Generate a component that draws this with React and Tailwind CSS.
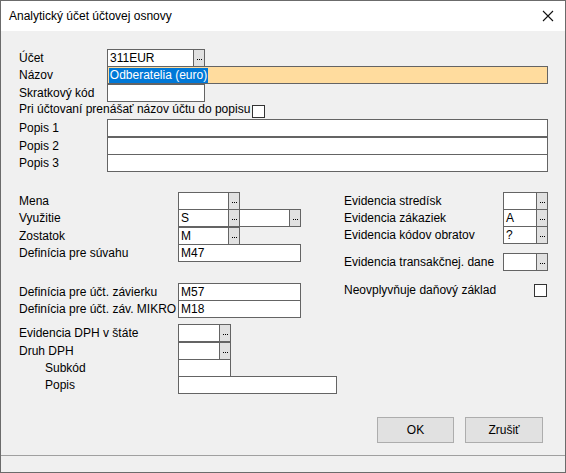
import React from "react";

const box = "border border-[#646464] bg-white h-[18px] flex items-center pl-[2px] text-[12px] leading-none text-black";

function Dots() {
  return (
    <div className="-ml-px h-[18px] w-[12px] border border-[#646464] bg-[#e1e1e1] flex items-end justify-center gap-[1px] pb-[6px]">
      <span className="w-[1px] h-[1px] bg-black" />
      <span className="w-[1px] h-[1px] bg-black" />
      <span className="w-[1px] h-[1px] bg-black" />
    </div>
  );
}

function Label({ children, className = "" }) {
  return <div className={"h-[18px] leading-[18px] text-[12px] text-black whitespace-nowrap " + className}>{children}</div>;
}

function Check() {
  return <div className="w-[13px] h-[13px] border border-[#333333] bg-white" />;
}

export default function App() {
  return (
    <div
      className="w-[566px] h-[473px] border border-[#6b6b6b] bg-[#f0f0f0] flex flex-col overflow-hidden"
      style={{ fontFamily: '"Liberation Sans", Arial, sans-serif' }}
    >
      {/* title bar */}
      <div className="h-[30px] bg-white flex items-center justify-between pl-[8px] pr-[10px] shrink-0">
        <span className="text-[12px] text-black">Analytický účet účtovej osnovy</span>
        <svg width="12" height="12" viewBox="0 0 12 12" className="mr-[1px]">
          <path d="M1 1 L11 11 M11 1 L1 11" stroke="#111" strokeWidth="1.1" fill="none" />
        </svg>
      </div>

      {/* content */}
      <div className="h-[424px] flex flex-col pt-[18px] pl-[18px] pr-[17px] shrink-0">
        {/* top section */}
        <div className="flex flex-col">
          <div className="flex h-[17px]">
            <Label className="w-[88px]">Účet</Label>
            <div className={box + " w-[87px]"}>311EUR</div>
            <Dots />
          </div>
          <div className="flex h-[18px]">
            <Label className="w-[88px]">Názov</Label>
            <div className="border border-[#646464] bg-[#ffdc9e] h-[18px] w-[442px] flex items-center pl-[1px] text-[12px] leading-none">
              <span className="bg-[#0078d7] text-white h-[15px] flex items-center px-[1px]">Odberatelia (euro)</span>
            </div>
          </div>
          <div className="flex h-[17px]">
            <Label className="w-[88px]">Skratkový kód</Label>
            <div className={box + " w-[98px]"}></div>
          </div>
          <div className="flex h-[18px] items-start">
            <Label className="mt-[-1px]">Pri účtovaní prenášať názov účtu do popisu</Label>
            <div className="mt-[4px] ml-[2px]">
              <Check />
            </div>
          </div>
          <div className="flex h-[18px]">
            <Label className="w-[88px]">Popis 1</Label>
            <div className={box + " w-[442px]"}></div>
          </div>
          <div className="flex h-[17px]">
            <Label className="w-[88px]">Popis 2</Label>
            <div className={box + " w-[442px]"}></div>
          </div>
          <div className="flex h-[18px]">
            <Label className="w-[88px]">Popis 3</Label>
            <div className={box + " w-[442px]"}></div>
          </div>
        </div>

        {/* middle section */}
        <div className="flex mt-[20px]">
          <div className="w-[325px] flex flex-col">
            <div className="flex h-[17px]">
              <Label className="w-[159px]">Mena</Label>
              <div className={box + " w-[51px]"}></div>
              <Dots />
            </div>
            <div className="flex h-[18px]">
              <Label className="w-[159px]">Využitie</Label>
              <div className={box + " w-[51px]"}>S</div>
              <Dots />
              <div className={box + " w-[51px] -ml-px"}></div>
              <Dots />
            </div>
            <div className="flex h-[17px]">
              <Label className="w-[159px]">Zostatok</Label>
              <div className={box + " w-[51px]"}>M</div>
              <Dots />
            </div>
            <div className="flex h-[39px]">
              <Label className="w-[159px]">Definícia pre súvahu</Label>
              <div className={box + " w-[123px]"}>M47</div>
            </div>
            <div className="flex h-[17px]">
              <Label className="w-[159px]">Definícia pre účt. závierku</Label>
              <div className={box + " w-[123px]"}>M57</div>
            </div>
            <div className="flex h-[18px]">
              <Label className="w-[159px]">Definícia pre účt. záv. MIKRO</Label>
              <div className={box + " w-[123px]"}>M18</div>
            </div>
          </div>

          <div className="flex flex-col">
            <div className="flex h-[17px]">
              <Label className="w-[159px]">Evidencia stredísk</Label>
              <div className={box + " w-[34px]"}></div>
              <Dots />
            </div>
            <div className="flex h-[17px]">
              <Label className="w-[159px]">Evidencia zákaziek</Label>
              <div className={box + " w-[34px]"}>A</div>
              <Dots />
            </div>
            <div className="flex h-[27px]">
              <Label className="w-[159px]">Evidencia kódov obratov</Label>
              <div className={box + " w-[34px]"}>?</div>
              <Dots />
            </div>
            <div className="flex h-[31px]">
              <Label className="w-[159px]">Evidencia transakčnej. dane</Label>
              <div className={box + " w-[34px]"}></div>
              <Dots />
            </div>
            <div className="flex h-[18px] items-start">
              <Label className="w-[190px] -mt-[3px]">Neovplyvňuje daňový základ</Label>
              <Check />
            </div>
          </div>
        </div>

        {/* lower section */}
        <div className="flex flex-col mt-[6px]">
          <div className="flex h-[18px]">
            <Label className="w-[159px]">Evidencia DPH v štáte</Label>
            <div className={box + " w-[42px]"}></div>
            <Dots />
          </div>
          <div className="flex h-[17px]">
            <Label className="w-[159px]">Druh DPH</Label>
            <div className={box + " w-[42px]"}></div>
            <Dots />
          </div>
          <div className="flex h-[17px]">
            <Label className="w-[159px] pl-[26px]">Subkód</Label>
            <div className={box + " w-[53px]"}></div>
          </div>
          <div className="flex h-[18px]">
            <Label className="w-[159px] pl-[26px]">Popis</Label>
            <div className={box + " w-[159px]"}></div>
          </div>
        </div>

        {/* buttons */}
        <div className="flex justify-end gap-[11px] mt-[23px] pr-[5px]">
          <button className="w-[77px] h-[26px] border border-[#adadad] bg-[#e1e1e1] text-[12px] text-black">OK</button>
          <button className="w-[78px] h-[26px] border border-[#adadad] bg-[#e1e1e1] text-[12px] text-black">Zrušiť</button>
        </div>
      </div>

      {/* status bar */}
      <div className="flex-1 border-t border-[#a0a0a0] bg-[#f0f0f0]" />
    </div>
  );
}
